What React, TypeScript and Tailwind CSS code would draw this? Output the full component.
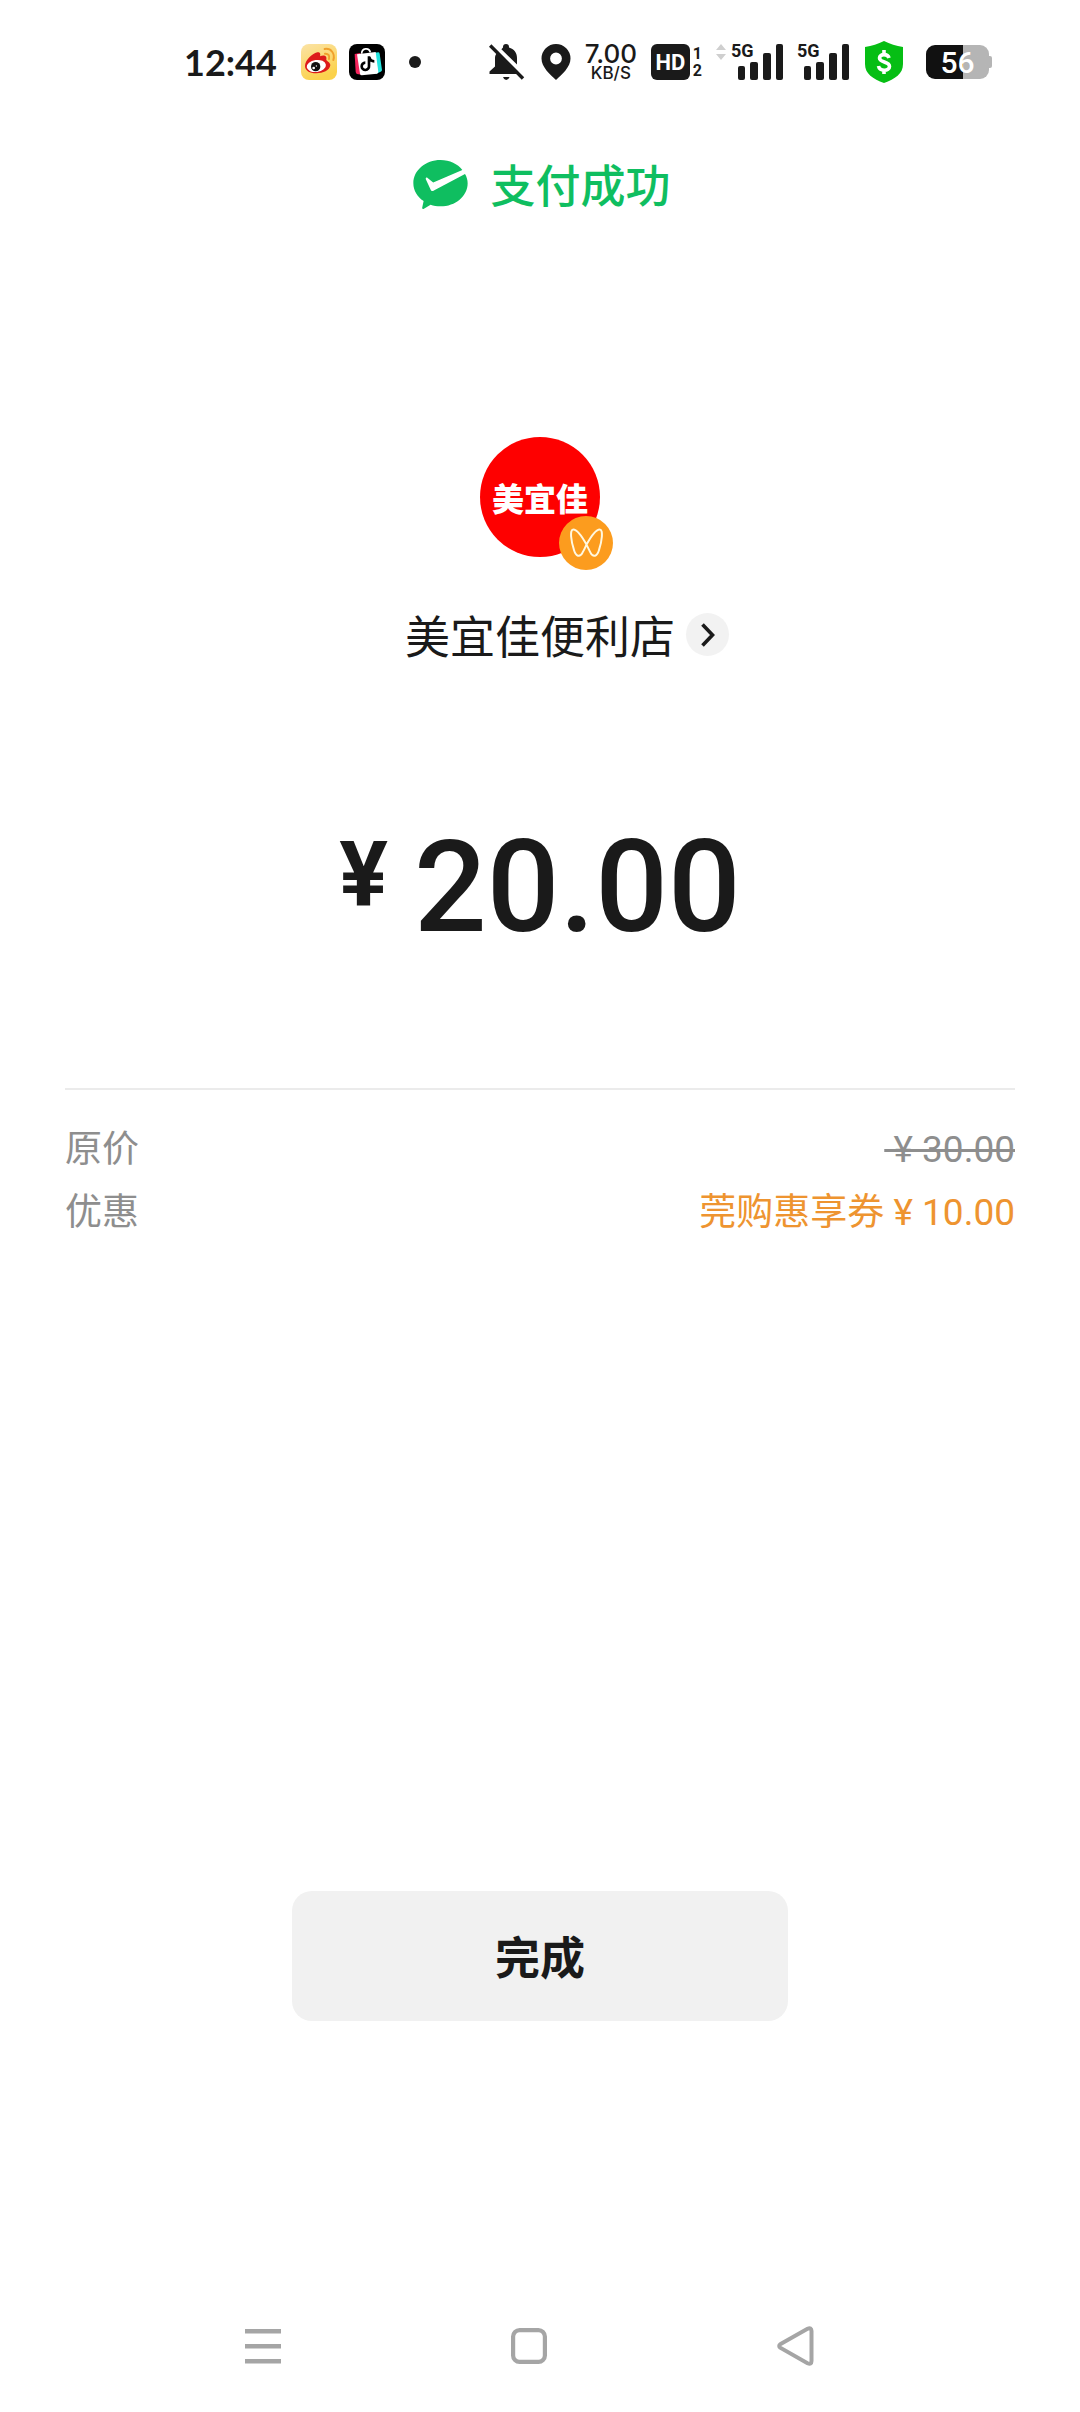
import React from "react";

const priceRows = [
  { label: "原价", value: "\u00a0¥ 30.00", type: "original" },
  { label: "优惠", value: "莞购惠享券 ¥ 10.00", type: "discount" },
];

const WeiboIcon: React.FC = () => (
  <svg viewBox="0 0 108 108" className="size-9">
    <defs>
      <linearGradient id="weibo-bg" x1="0" y1="0" x2="0.4" y2="1">
        <stop offset="0" stopColor="#fbe3a6" />
        <stop offset="1" stopColor="#fbd24c" />
      </linearGradient>
    </defs>
    <rect width="108" height="108" rx="24" fill="url(#weibo-bg)" />
    <path
      d="M12 66C13 48 32 30 49 25C58 24 59 31 57 37C66 32 79 33 76 46C74 51 88 54 88 64C86 80 66 88 46 88C26 88 12 80 12 66Z"
      fill="#dd1b1b"
    />
    <ellipse cx="46" cy="66" rx="29" ry="18" transform="rotate(-8 46 66)" fill="#fff" />
    <circle cx="44" cy="68" r="14" fill="#111" />
    <circle cx="38" cy="72" r="4" fill="#fff" />
    <circle cx="46" cy="66" r="2" fill="#fff" />
    <path
      d="M72 29C81 28 87 35 84 45M71 15C90 12 103 29 97 48"
      fill="none"
      stroke="#f0a02c"
      strokeWidth="6"
      strokeLinecap="round"
    />
  </svg>
);

const DouyinShopIcon: React.FC = () => (
  <svg viewBox="0 0 108 108" className="size-9">
    <rect width="108" height="108" rx="24" fill="#000" />
    <path d="M17 30L34 27L38 92L24 90Q21 89 20 84Z" fill="#f5245c" />
    <path d="M74 27L88 25Q91 25 92 29L99 78Q99 82 95 83L80 90Z" fill="#25e4df" />
    <path d="M24 31L80 24L88 84Q88 88 84 89L38 94Q34 94 33 89Z" fill="#fff" />
    <path d="M38 29C38 12 60 9 64 25" fill="none" stroke="#fff" strokeWidth="5" />
    <path
      d="M60 37V66A11 11 0 1 1 49 56M61 40C63 49 68 52 76 52"
      fill="none"
      stroke="#000"
      strokeWidth="8"
    />
  </svg>
);

const BellOffIcon: React.FC = () => (
  <svg viewBox="0 0 36 36" className="size-9" fill="#1a1a1a">
    <path d="M14 3.6V3A3 3 0 0 1 20 3V3.600C25 5 28 9 28 14V20.500L12.400 5.200Z" />
    <path d="M7.600 9.500L28.500 30H0.500V27.500L6 22.500V14C6 12.300 6.600 10.800 7.600 9.500Z" />
    <path d="M14 33H20.500Q19.500 36 17.200 36T14 33Z" />
    <path d="M1.200 1.500L34 34.500" stroke="#1a1a1a" strokeWidth="3.400" />
  </svg>
);

const LocationIcon: React.FC = () => (
  <svg viewBox="0 0 30 36" className="h-9 w-[30px]">
    <path
      fillRule="evenodd"
      d="M15 0A14.500 14.500 0 0 1 29.500 14.500C29.500 23 21 30.500 15 36C9 30.500 0.500 23 0.500 14.500A14.500 14.500 0 0 1 15 0ZM15 8.600A5.900 5.900 0 1 0 15 20.400A5.900 5.900 0 1 0 15 8.600Z"
      fill="#1a1a1a"
    />
  </svg>
);

const Signal: React.FC = () => (
  <div className="relative flex h-9 w-[52px] items-end justify-end gap-[5px]">
    <span className="absolute -top-px left-0 text-lg leading-4 font-bold">5G</span>
    <span className="h-[14px] w-[7px] rounded-xs bg-[#1a1a1a]" />
    <span className="h-[18px] w-2 rounded-xs bg-[#1a1a1a]" />
    <span className="h-[27px] w-2 rounded-xs bg-[#1a1a1a]" />
    <span className="h-9 w-[7px] rounded-xs bg-[#1a1a1a]" />
  </div>
);

const StatusBar: React.FC = () => (
  <header className="flex h-[124px] items-center justify-between pr-[88px] pl-[184px] font-[Roboto,sans-serif] text-[#1a1a1a]">
    <div className="flex items-center">
      <time className="w-[117px] font-[Lato,sans-serif] text-4xl font-bold">12:44</time>
      <div className="flex items-center gap-3">
        <WeiboIcon />
        <DouyinShopIcon />
      </div>
      <span className="ml-6 size-3 rounded-full bg-[#1a1a1a]" />
    </div>
    <div className="flex items-center">
      <BellOffIcon />
      <div className="ml-4">
        <LocationIcon />
      </div>
      <div className="ml-3 flex w-[56px] flex-col items-center font-[Inter,sans-serif] font-medium">
        <span className="text-[26px] leading-[22px]">7.00</span>
        <span className="text-[17px] leading-[17px]">KB/S</span>
      </div>
      <div className="ml-3 flex h-9 w-[39px] items-center justify-center rounded-md bg-[#1a1a1a] text-[22px] font-bold text-white">
        HD
      </div>
      <div className="ml-[3px] flex flex-col text-base leading-[17px] font-bold">
        <span>1</span>
        <span>2</span>
      </div>
      <svg viewBox="0 0 10 16" className="mr-[5px] mb-5 ml-[14px] h-4 w-[10px]" fill="#cfcfcf">
        <path d="M5 0L10 6H0ZM0 10H10L5 16Z" />
      </svg>
      <Signal />
      <div className="ml-[14px]">
        <Signal />
      </div>
      <svg viewBox="0 0 38 42" className="ml-4 h-[42px] w-[38px]">
        <path
          d="M19 0C25 3 31 5 38 6V23C38 33 30 38 19 42C8 38 0 33 0 23V6C7 5 13 3 19 0Z"
          fill="#06be14"
        />
        <path
          d="M24 17C23 12.500 14.500 12.500 14.500 17C14.500 22 24.500 20 24.500 25.500C24.500 30.500 14.500 30.500 13.500 25M19 9V14M19 28V33"
          fill="none"
          stroke="#fff"
          strokeWidth="3.600"
        />
      </svg>
      <div className="ml-[23px] flex h-[34px] w-[63px] items-center justify-center rounded-[9px] bg-linear-to-r from-[#111] from-59% to-[#b5b5b5] to-59% text-[30px] font-medium text-white">
        56
      </div>
      <span className="h-3 w-[3px] rounded-r-xs bg-[#b5b5b5]" />
    </div>
  </header>
);

const PaySuccess: React.FC = () => (
  <div className="mt-6 flex h-[72px] items-center justify-center gap-[22px] pl-1 text-[#0fbe60]">
    <svg viewBox="0 0 164 148" className="h-[49px] w-[55px]">
      <path
        d="M82 0C110 0 134 12 148 30L60 68L43 54C39 51 36 54 38 59L52 89C54 94 58 95 62 92L156 42C161 50 164 60 164 70C164 109 127 140 82 140C71 140 61 138 52 135L32 147C28 149 26 147 27 143L31 124C12 111 0 92 0 70C0 31 37 0 82 0Z"
        fill="#0fbe60"
      />
    </svg>
    <h1 className="text-[45px] font-medium">支付成功</h1>
  </div>
);

const Merchant: React.FC = () => (
  <section className="mt-[217px] flex flex-col items-center">
    <div className="relative flex size-[120px] items-center justify-center rounded-full bg-[#fe0000]">
      <span className="text-[32px] leading-none font-black text-white">美宜佳</span>
      <span className="absolute top-[79px] left-[79px] flex size-[54px] items-center justify-center rounded-full bg-[#fc9c1e]">
        <svg viewBox="0 0 100 90" className="h-[30px] w-[33px]">
          <path
            d="M50 50C38 28 22 4 10 4C-2 4 4 42 12 66C18 86 30 90 38 74C44 64 47 56 50 50C62 28 78 4 90 4C102 4 96 42 88 66C82 86 70 90 62 74C56 62 53 56 50 50Z"
            fill="none"
            stroke="#fff8e0"
            strokeWidth="6"
          />
        </svg>
      </span>
    </div>
    <a href="#" className="mt-11 grid w-full grid-cols-[1fr_auto_1fr] items-center text-[#1a1a1a]">
      <span className="col-start-2 text-[45px]">美宜佳便利店</span>
      <span className="ml-[11px] flex size-[43px] items-center justify-center rounded-full bg-[#f2f2f2]">
        <svg viewBox="0 0 14 24" className="h-6 w-[14px]">
          <path d="M1.500 1.500L11.500 12L1.500 22.500" fill="none" stroke="#1a1a1a" strokeWidth="3.600" />
        </svg>
      </span>
    </a>
  </section>
);

const Amount: React.FC = () => (
  <p className="mt-[153px] flex items-start justify-center gap-[26px] font-[Roboto,sans-serif] text-[#1a1a1a]">
    <span className="text-[91px] leading-[107px] font-bold">¥</span>
    <span className="text-[128px] leading-[130px] font-medium">20.00</span>
  </p>
);

const PriceDetail: React.FC = () => (
  <dl className="mx-[65px] mt-[136px] border-t-2 border-[#ebebeb] pt-7 font-[Roboto,'Noto_Sans_CJK_SC',sans-serif] text-[37px] leading-[63px] text-[#8e8e8e]">
    {priceRows.map((row) => (
      <div key={row.label} className="flex justify-between">
        <dt>{row.label}</dt>
        {row.type === "original" ? (
          <dd className="line-through">{row.value}</dd>
        ) : (
          <dd className="text-[#ee9430]">{row.value}</dd>
        )}
      </div>
    ))}
  </dl>
);

const NavBar: React.FC = () => (
  <nav className="grid h-[132px] grid-cols-3 items-center justify-items-center pr-[152px] pl-[130px]">
    <button type="button" aria-label="菜单">
      <svg viewBox="0 0 36 36" className="size-9" fill="#a5a5a5">
        <path d="M0 1H36V5.500H0ZM0 16H36V20.500H0ZM0 31H36V35.500H0Z" />
      </svg>
    </button>
    <button type="button" aria-label="主页">
      <svg viewBox="0 0 36 36" className="size-9">
        <rect x="2.100" y="2.100" width="31.800" height="31.800" rx="6.500" fill="none" stroke="#a5a5a5" strokeWidth="4.200" />
      </svg>
    </button>
    <button type="button" aria-label="返回">
      <svg viewBox="0 0 37 40" className="h-10 w-[37px]">
        <path
          d="M3.200 18.300L30.500 2.800Q34.500 1 34.500 5V35Q34.500 39 30.500 37.200L3.200 21.700Q1.200 20 3.200 18.300Z"
          fill="none"
          stroke="#a5a5a5"
          strokeWidth="4"
        />
      </svg>
    </button>
  </nav>
);

const App: React.FC = () => {
  return (
    <div className="flex min-h-screen flex-col bg-white font-['Noto_Sans_CJK_SC',sans-serif]">
      <StatusBar />
      <main className="flex flex-1 flex-col">
        <PaySuccess />
        <Merchant />
        <Amount />
        <PriceDetail />
        <button
          type="button"
          className="mx-auto mt-auto mb-[259px] h-[130px] w-[46%] rounded-[20px] bg-[#f1f1f1] text-[45px] font-bold text-[#1a1a1a]"
        >
          完成
        </button>
      </main>
      <NavBar />
    </div>
  );
};

export default App;
